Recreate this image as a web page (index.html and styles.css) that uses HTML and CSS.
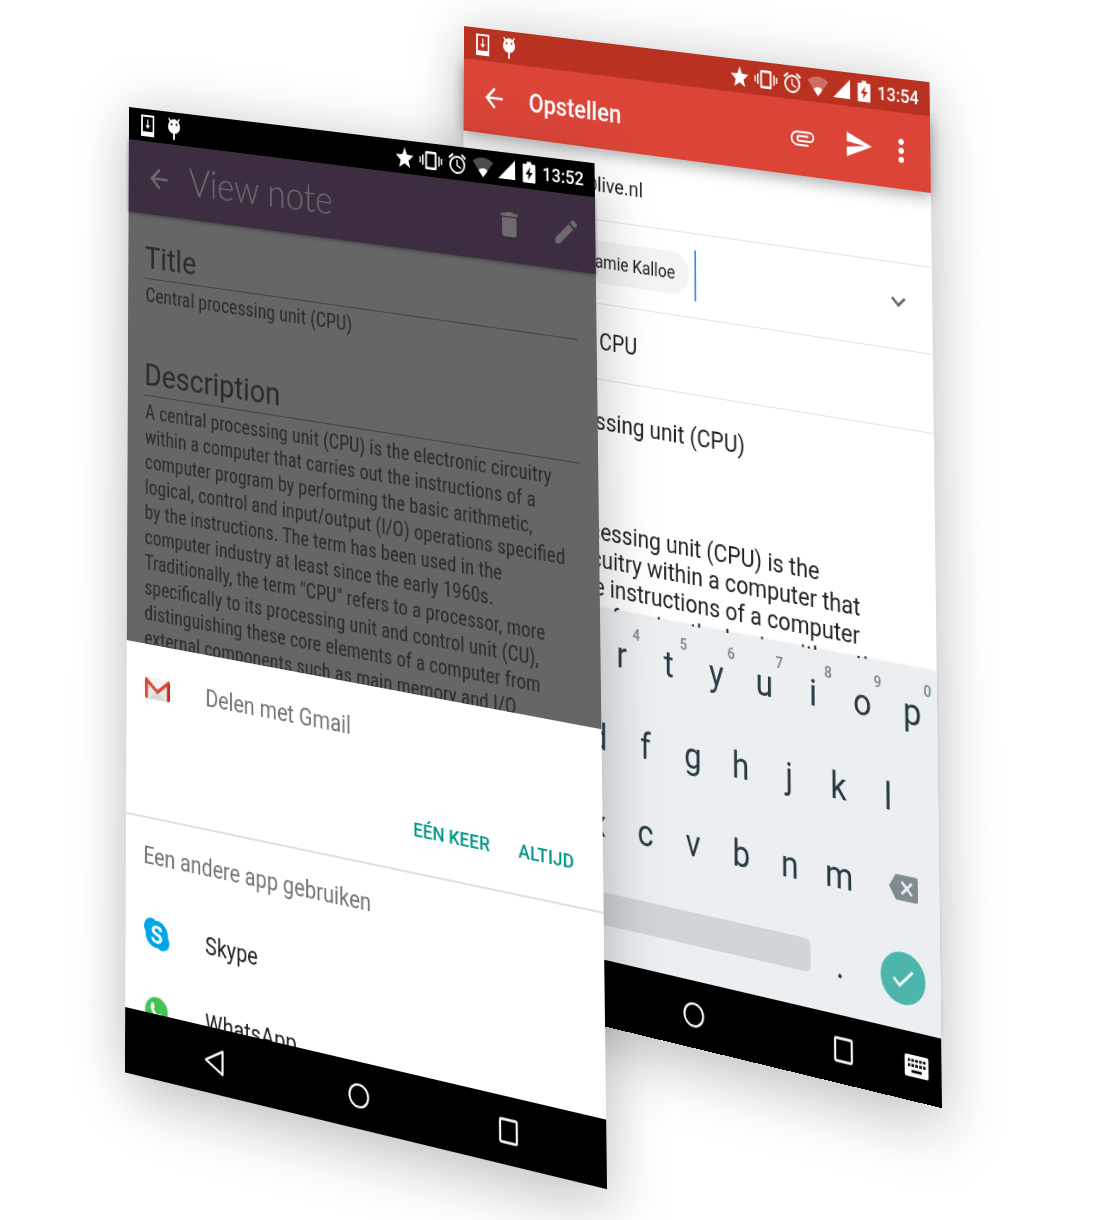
FILE: index.html
```html
<!DOCTYPE html>
<html lang="nl">
<head>
<meta charset="utf-8">
<meta name="viewport" content="width=device-width, initial-scale=1">
<title>Notitie delen</title>
<link rel="stylesheet" href="styles.css">
</head>
<body>
<svg class="sprite" aria-hidden="true">
  <symbol id="i-download" viewBox="0 0 16 22"><path fill-rule="evenodd" d="M0 0h16v22H0zM2 2v15h12V2z"/><path d="M7.300 4.500h1.400v6h2.300L8 14l-3-3.500h2.300z"/></symbol>
  <symbol id="i-droid" viewBox="0 0 16 22"><path fill-rule="evenodd" d="M2 0l2 2.500a7 7 0 0 1 8 0L14 0l1 .8-1.700 3C16.500 8 15.500 13 11 15.500H9V22H7v-6.500H5C.5 13 -.5 8 2.700 3.800L1 .8zM5 5.200a1.200 1.200 0 1 0 .1 0zM11 5.200a1.200 1.200 0 1 0 .1 0z"/></symbol>
  <symbol id="i-star" viewBox="0 0 24 24"><path d="M12 17.800L18.200 22l-1.700-7.300L22.200 9.500l-7.500-.6L12 2 9.300 8.900l-7.500.6 5.700 5.200L5.800 22z"/></symbol>
  <symbol id="i-vibrate" viewBox="0 0 26 24"><path d="M0 9h1.600v6H0zm3-2h1.600v10H3zm18.400 0H23v10h-1.600zM24.400 9H26v6h-1.600z"/><path fill-rule="evenodd" d="M8 3h10a1.500 1.500 0 0 1 1.500 1.500v15A1.500 1.500 0 0 1 18 21H8a1.500 1.500 0 0 1-1.500-1.500v-15A1.500 1.500 0 0 1 8 3zm.6 2.600v12.800h8.800V5.600z"/></symbol>
  <symbol id="i-alarm" viewBox="0 0 24 24"><path d="M22 5.720l-4.600-3.860-1.290 1.530 4.600 3.860zM7.880 3.390L6.600 1.860 2 5.710l1.290 1.530zM12.500 8H11v6l4.750 2.850.75-1.230-4-2.370zM12 4a9 9 0 1 0 0 18 9 9 0 0 0 0-18zm0 16a7 7 0 1 1 0-14 7 7 0 0 1 0 14z"/></symbol>
  <symbol id="i-wifi" viewBox="0 0 24 24"><path opacity=".3" d="M12 22L.5 7a18 18 0 0 1 23 0z"/><path d="M12 22l-5.200-6.800a8.500 8.500 0 0 1 10.400 0z"/></symbol>
  <symbol id="i-signal" viewBox="0 0 22 24"><path d="M0 21L19 2v19z"/></symbol>
  <symbol id="i-battery" viewBox="0 0 16 24"><path fill-rule="evenodd" d="M5 1.500h5v2.200h3.500a1 1 0 0 1 1 1V21a1 1 0 0 1-1 1h-12a1 1 0 0 1-1-1V4.700a1 1 0 0 1 1-1H5zM9 6.500L3.500 14H7l-1 5.500L11.500 12H8z"/></symbol>
  <symbol id="i-back" viewBox="0 0 24 24"><path d="M20 11H7.830l5.590-5.590L12 4l-8 8 8 8 1.410-1.410L7.830 13H20z"/></symbol>
  <symbol id="i-delete" viewBox="0 0 24 24"><path d="M6 19a2 2 0 0 0 2 2h8a2 2 0 0 0 2-2V7H6zM19 4h-3.500l-1-1h-5l-1 1H5v2h14z"/></symbol>
  <symbol id="i-edit" viewBox="0 0 24 24"><path d="M3 17.250V21h3.750L17.810 9.940l-3.750-3.750zM20.710 7.040a1 1 0 0 0 0-1.410l-2.340-2.340a1 1 0 0 0-1.410 0l-1.830 1.830 3.750 3.750z"/></symbol>
  <symbol id="i-attach" viewBox="0 0 24 24"><path d="M2 12.500A5.500 5.500 0 0 1 7.500 7H18a4 4 0 0 1 0 8H9.500a2.500 2.500 0 0 1 0-5H17v1.500H9.500a1 1 0 0 0 0 2H18a2.500 2.500 0 0 0 0-5H7.500a4 4 0 0 0 0 8H17V18H7.500A5.500 5.500 0 0 1 2 12.500z"/></symbol>
  <symbol id="i-send" viewBox="0 0 24 24"><path d="M2 21l21-9L2 3v7l15 2-15 2z"/></symbol>
  <symbol id="i-more" viewBox="0 0 24 24"><circle cx="12" cy="5.500" r="2.200"/><circle cx="12" cy="12" r="2.200"/><circle cx="12" cy="18.500" r="2.200"/></symbol>
  <symbol id="i-expand" viewBox="0 0 24 24"><path d="M16.590 8.590L12 13.170 7.410 8.590 6 10l6 6 6-6z"/></symbol>
  <symbol id="i-nav-back" viewBox="0 0 26 26"><path d="M22.500 2v22L3 13z" fill="none" stroke="currentColor" stroke-width="2.300" stroke-linejoin="round"/></symbol>
  <symbol id="i-nav-home" viewBox="0 0 26 26"><circle cx="13" cy="13" r="10.500" fill="none" stroke="currentColor" stroke-width="2.200"/></symbol>
  <symbol id="i-nav-recent" viewBox="0 0 26 26"><rect x="4" y="2.500" width="18" height="21" rx="1" fill="none" stroke="currentColor" stroke-width="2.300"/></symbol>
  <symbol id="i-nav-keyboard" viewBox="0 0 28 22"><path fill-rule="evenodd" d="M2 0h24a2 2 0 0 1 2 2v18a2 2 0 0 1-2 2H2a2 2 0 0 1-2-2V2a2 2 0 0 1 2-2zM3.500 4v3h3V4zm4.500 0v3h3V4zm4.500 0v3h3V4zm4.500 0v3h3V4zm4.500 0v3h3V4zM3.500 9v3h3V9zm4.500 0v3h3V9zm4.500 0v3h3V9zm4.500 0v3h3V9zm4.500 0v3h3V9zM8 15v3h12v-3z"/></symbol>
  <symbol id="i-backspace" viewBox="0 0 34 28"><path fill-rule="evenodd" d="M9.500 1H32a2 2 0 0 1 2 2v22a2 2 0 0 1-2 2H9.500a2.500 2.500 0 0 1-2-1L0 14 7.500 2a2.500 2.500 0 0 1 2-1zm4.300 7.900l5.100 5.100-5.100 5.100 2 2 5.100-5.100 5.100 5.100 2-2-5.100-5.100 5.100-5.100-2-2-5.100 5.100-5.100-5.100z"/></symbol>
  <symbol id="i-check" viewBox="0 0 24 24"><path d="M9 16.170L4.830 12l-1.420 1.410L9 19 21 7l-1.410-1.410z"/></symbol>
</svg>

<main class="stage">

  <section class="phone phone-mail" aria-label="Opstellen">
    <div class="status status-mail">
      <svg class="ic-notice"><use href="#i-download"/></svg>
      <svg class="ic-notice"><use href="#i-droid"/></svg>
      <div class="tray">
        <svg class="ic24"><use href="#i-star"/></svg>
        <svg class="ic26"><use href="#i-vibrate"/></svg>
        <svg class="ic24"><use href="#i-alarm"/></svg>
        <svg class="ic24"><use href="#i-wifi"/></svg>
        <svg class="ic22"><use href="#i-signal"/></svg>
        <svg class="ic16"><use href="#i-battery"/></svg>
        <time class="clock">13:54</time>
      </div>
    </div>
    <header class="bar bar-mail">
      <button class="icon-btn" type="button" aria-label="Terug"><svg><use href="#i-back"/></svg></button>
      <h1 class="mail-title">Opstellen</h1>
      <div class="mail-actions">
        <button class="icon-btn" type="button" aria-label="Bijlage"><svg><use href="#i-attach"/></svg></button>
        <button class="icon-btn send" type="button" aria-label="Verzenden"><svg><use href="#i-send"/></svg></button>
        <button class="icon-btn" type="button" aria-label="Meer"><svg><use href="#i-more"/></svg></button>
      </div>
    </header>
    <form class="compose">
      <div class="field field-from"><input type="text" aria-label="Van" value="@live.nl" readonly></div>
      <div class="field field-to">
        <span class="chip">Jamie Kalloe</span>
        <span class="caret"></span>
        <input type="text" aria-label="Aan">
        <button class="icon-btn expand" type="button" aria-label="Cc/Bcc"><svg><use href="#i-expand"/></svg></button>
      </div>
      <div class="field field-subject"><input type="text" aria-label="Onderwerp" value="CPU"></div>
      <textarea class="message" aria-label="Bericht">Central processing unit (CPU)



A central processing unit (CPU) is the
electronic circuitry within a computer that
carries out the instructions of a computer
program by performing the basic arithmetic,</textarea>
    </form>
    <div class="keyboard">
      <div class="keys">
        <button type="button">q<sup>1</sup></button><button type="button">w<sup>2</sup></button><button type="button">e<sup>3</sup></button><button type="button">r<sup>4</sup></button><button type="button">t<sup>5</sup></button><button type="button">y<sup>6</sup></button><button type="button">u<sup>7</sup></button><button type="button">i<sup>8</sup></button><button type="button">o<sup>9</sup></button><button type="button">p<sup>0</sup></button>
      </div>
      <div class="keys keys-inset">
        <button type="button">a</button><button type="button">s</button><button type="button">d</button><button type="button">f</button><button type="button">g</button><button type="button">h</button><button type="button">j</button><button type="button">k</button><button type="button">l</button>
      </div>
      <div class="keys keys-third">
        <button type="button">z</button><button type="button">x</button><button type="button">c</button><button type="button">v</button><button type="button">b</button><button type="button">n</button><button type="button">m</button><button class="backspace" type="button" aria-label="Wissen"><svg><use href="#i-backspace"/></svg></button>
      </div>
      <div class="keys keys-last">
        <button class="space" type="button" aria-label="Spatie"></button><button class="dot" type="button">.</button><button class="done" type="button" aria-label="Gereed"><svg><use href="#i-check"/></svg></button>
      </div>
    </div>
    <nav class="nav">
      <button type="button" aria-label="Terug"><svg><use href="#i-nav-back"/></svg></button>
      <button type="button" aria-label="Start"><svg><use href="#i-nav-home"/></svg></button>
      <button type="button" aria-label="Recent"><svg><use href="#i-nav-recent"/></svg></button>
      <button class="nav-keyboard" type="button" aria-label="Toetsenbord"><svg><use href="#i-nav-keyboard"/></svg></button>
    </nav>
  </section>

  <section class="phone phone-note" aria-label="View note">
    <div class="status status-note">
      <svg class="ic-notice"><use href="#i-download"/></svg>
      <svg class="ic-notice"><use href="#i-droid"/></svg>
      <div class="tray">
        <svg class="ic24"><use href="#i-star"/></svg>
        <svg class="ic26"><use href="#i-vibrate"/></svg>
        <svg class="ic24"><use href="#i-alarm"/></svg>
        <svg class="ic24"><use href="#i-wifi"/></svg>
        <svg class="ic22"><use href="#i-signal"/></svg>
        <svg class="ic16"><use href="#i-battery"/></svg>
        <time class="clock">13:52</time>
      </div>
    </div>
    <header class="bar bar-note">
      <button class="icon-btn" type="button" aria-label="Terug"><svg><use href="#i-back"/></svg></button>
      <h1 class="note-title">View note</h1>
      <div class="note-actions">
        <button class="icon-btn" type="button" aria-label="Verwijderen"><svg><use href="#i-delete"/></svg></button>
        <button class="icon-btn" type="button" aria-label="Bewerken"><svg><use href="#i-edit"/></svg></button>
      </div>
    </header>
    <article class="note">
      <h2>Title</h2>
      <p>Central processing unit (CPU)</p>
      <h2>Description</h2>
      <p>A central processing unit (CPU) is the electronic circuitry<br>
        within a computer that carries out the instructions of a<br>
        computer program by performing the basic arithmetic,<br>
        logical, control and input/output (I/O) operations specified<br>
        by the instructions. The term has been used in the<br>
        computer industry at least since the early 1960s.<br>
        Traditionally, the term "CPU" refers to a processor, more<br>
        specifically to its processing unit and control unit (CU),<br>
        distinguishing these core elements of a computer from<br>
        external components such as main memory and I/O</p>
    </article>
    <div class="sheet">
      <div class="app app-default">
        <svg class="app-icon" viewBox="-1 -1 34 34">
          <path fill="#e6e6e6" d="M2 5h28v22H2z"/>
          <path fill="#cfcfcf" d="M16 18L5 27h22z" opacity=".7"/>
          <path fill="#f4f4f4" d="M3 5h26L16 17z"/>
          <path fill="#dd4b3e" d="M0 7a2 2 0 0 1 2-2l14 11.500L30 5a2 2 0 0 1 2 2l-3.500 4L16 21 4 11.500V27H2a2 2 0 0 1-2-2z"/>
          <path fill="#b93127" d="M28 10.500L32 7v18a2 2 0 0 1-2 2h-2z"/>
        </svg>
        <span>Delen met Gmail</span>
      </div>
      <div class="choices">
        <button type="button">EÉN KEER</button>
        <button type="button">ALTIJD</button>
      </div>
      <h3 class="sheet-label">Een andere app gebruiken</h3>
      <div class="app">
        <svg class="app-icon" viewBox="-1 -1 34 34">
          <g fill="#00a5e8"><circle cx="9" cy="9" r="9"/><circle cx="23" cy="23" r="9"/><circle cx="16" cy="16" r="14"/></g>
          <text class="skype-s" x="16" y="25" text-anchor="middle">S</text>
        </svg>
        <span>Skype</span>
      </div>
      <div class="app">
        <svg class="app-icon" viewBox="-1 -1 34 34">
          <circle cx="16" cy="16" r="15.500" fill="#e9e9e9"/>
          <circle cx="16" cy="16" r="14" fill="#43c353"/>
          <path fill="#fff" d="M9.500 9c1-1.500 2.500-1.500 3-.5l1.200 3c.3 1-1.200 2-1.200 2.500 1 2.500 3 4.300 5.500 5.300.7 0 1.600-1.700 2.400-1.400l2.900 1.500c.8.600.2 2.300-.6 3-3 2.300-8.500-.8-11.200-4-2.500-3-3.800-6.500-2-9.400z"/>
        </svg>
        <span>WhatsApp</span>
      </div>
    </div>
    <nav class="nav">
      <button type="button" aria-label="Terug"><svg><use href="#i-nav-back"/></svg></button>
      <button type="button" aria-label="Start"><svg><use href="#i-nav-home"/></svg></button>
      <button type="button" aria-label="Recent"><svg><use href="#i-nav-recent"/></svg></button>
    </nav>
  </section>

</main>
</body>
</html>
```
FILE: styles.css
```css
* {
  box-sizing: border-box;
}

body {
  margin: 0;
  background: #fff;
  font-family: Roboto, "Liberation Sans", sans-serif;
  overflow-x: hidden;
}

h1, h2, h3, p {
  margin: 0;
  font-weight: 400;
}

button, input, textarea {
  margin: 0;
  padding: 0;
  border: 0;
  background: none;
  color: inherit;
  font: inherit;
  outline: 0;
}

svg {
  display: block;
  fill: currentColor;
}

.sprite {
  position: absolute;
  width: 0;
  height: 0;
}

/* Two tilted handsets on a free canvas */
.stage {
  position: relative;
  min-height: 1220px;
  overflow: hidden;
}

.phone {
  position: absolute;
  display: flex;
  flex-direction: column;
  width: 540px;
  height: 960px;
  background: #fff;
  box-shadow: 0 12px 60px rgba(0, 0, 0, 0.28);
  transform-origin: 0 0;
  transform: matrix3d(0.81434, 0.098317, 0, -0.00010246, -0.0040302, 0.97264, 0, -0.000034167, 0, 0, 1, 0, 0, 0, 0, 1);
}

.phone-mail {
  left: 464px;
  top: 26px;
}

.phone-note {
  left: 129px;
  top: 107px;
}

/* Status bar */
.status {
  position: relative;
  z-index: 1;
  display: flex;
  flex: none;
  align-items: center;
  gap: 16px;
  height: 33px;
  padding: 0 12px 0 15px;
  color: #fff;
}

.status-mail { background: #b93221; }
.status-note { background: #000; }

.tray {
  display: flex;
  align-items: center;
  gap: 5px;
  margin-left: auto;
}

.ic-notice { width: 16px; height: 22px; }
.ic16 { width: 16px; height: 24px; }
.ic22 { width: 22px; height: 24px; }
.ic24 { width: 24px; height: 24px; }
.ic26 { width: 26px; height: 24px; }

.clock {
  padding-left: 1px;
  font-size: 18px;
  font-weight: 500;
}

/* App bars */
.bar {
  position: relative;
  display: flex;
  flex: none;
  align-items: center;
  height: 74px;
  padding: 0 16px 0 21px;
}

.bar-mail {
  background: #db4437;
  color: #fff;
  box-shadow: 0 4px 14px rgba(0, 0, 0, 0.35);
}

.bar-note {
  background: #3c2d40;
  color: #6e6b6e;
  box-shadow: 0 1px 4px rgba(0, 0, 0, 0.4);
}

.icon-btn {
  flex: none;
  width: 32px;
  height: 32px;
}

.icon-btn svg {
  width: 32px;
  height: 32px;
}

.mail-title {
  margin-left: 26px;
  font-size: 26px;
  font-weight: 500;
}

.note-title {
  margin-left: 20px;
  padding-bottom: 4px;
  font-family: Lato, Roboto, sans-serif;
  font-size: 39px;
  font-weight: 300;
  line-height: 48px;
}

.mail-actions,
.note-actions {
  display: flex;
  margin-left: auto;
}

.note-actions { gap: 31px; }
.mail-actions { gap: 15px; }
.mail-actions .send { margin-left: 16px; }

/* Compose form */
.compose {
  display: flex;
  flex: 1;
  flex-direction: column;
  min-height: 0;
  overflow: hidden;
  color: #222;
}

.field {
  display: flex;
  flex: none;
  align-items: center;
  border-bottom: 1px solid #e4e4e4;
}

.field input {
  flex: 1;
  min-width: 0;
}

.field-from {
  height: 72px;
  padding-left: 142px;
  font-size: 21px;
}

.field-to {
  height: 83px;
  padding: 0 21px 0 96px;
}

.field-subject {
  height: 75px;
  padding-left: 163px;
  font-size: 23px;
}

.chip {
  height: 42px;
  padding: 0 16px 0 52px;
  border-radius: 21px;
  background: #f3f3f3;
  font-size: 18px;
  line-height: 42px;
}

.caret {
  width: 2px;
  height: 50px;
  margin-left: 6px;
  background: #4285f4;
}

.expand {
  margin-bottom: 8px;
  color: #666;
}

.message {
  flex: 1;
  min-height: 0;
  padding: 28px 0 0 16px;
  overflow: hidden;
  resize: none;
  font-size: 24px;
  line-height: 27px;
  white-space: pre;
}

/* Keyboard */
.keyboard {
  flex: none;
  padding-bottom: 4px;
  background: #ebeff2;
  color: #263a43;
  box-shadow: 0 -1px 3px rgba(0, 0, 0, 0.12);
}

.keys {
  display: flex;
  height: 83px;
}

.keys button {
  position: relative;
  flex: 1;
  font-size: 35px;
}

.keys sup {
  position: absolute;
  top: 10px;
  right: 6px;
  color: #77848a;
  font-size: 15px;
  font-weight: 500;
  line-height: 18px;
}

.keys-inset { padding: 0 27px; }
.keys-third { padding-left: 81px; }

.keys .backspace {
  flex: 0 0 81px;
  padding: 0 0 4px 27px;
  color: #7f8b90;
}

.backspace svg {
  width: 31px;
  height: 26px;
}

.keys-last {
  align-items: center;
  padding: 0 16px 0 140px;
}

.keys .space {
  height: 31px;
  margin-bottom: 6px;
  border-radius: 6px;
  background: #d0d5d8;
}

.keys .dot {
  flex: 0 0 54px;
  margin: 0 17px 0 5px;
}

.keys .done {
  flex: 0 0 48px;
  height: 48px;
  margin-bottom: 4px;
  padding-left: 9px;
  border-radius: 50%;
  background: #4db6ac;
  color: #fff;
}

.done svg {
  width: 30px;
  height: 30px;
}

/* Note */
.note {
  flex: 1;
  min-height: 0;
  padding: 0 20px;
  overflow: hidden;
  background: #666;
  color: #2b2b2b;
}

.note h2 {
  height: 66px;
  padding-top: 24px;
  border-bottom: 1px solid #434343;
  font-size: 32px;
  line-height: 40px;
}

.note p {
  padding: 4px 0 0 1px;
  margin-bottom: 23px;
  font-family: "Roboto Condensed", Roboto, sans-serif;
  font-size: 21px;
  line-height: 25px;
  white-space: nowrap;
}

/* Share sheet */
.sheet {
  flex: none;
  height: 359px;
  overflow: hidden;
  background: #fff;
  color: #212121;
  font-size: 23px;
}

.app {
  display: flex;
  align-items: center;
  gap: 41px;
  height: 74px;
  padding: 0 21px;
}

.app-default {
  height: 85px;
  color: #737373;
}

.app-icon {
  width: 32px;
  height: 32px;
}

.skype-s {
  fill: #fff;
  font-size: 25px;
  font-weight: 700;
}

.choices {
  display: flex;
  justify-content: flex-end;
  gap: 31px;
  height: 86px;
  padding: 32px 31px 0 0;
  border-bottom: 2px solid #e0e0e0;
  color: #009688;
  font-size: 19px;
  font-weight: 500;
}

.choices button { height: 20px; }

.sheet-label {
  padding-left: 21px;
  color: #737373;
  font-size: 23px;
  line-height: 74px;
}

/* System navigation */
.nav {
  position: relative;
  display: grid;
  flex: none;
  grid-template-columns: repeat(3, 1fr);
  height: 63px;
  padding: 0 22px;
  background: #000;
  color: #fff;
}

.nav button {
  display: grid;
  place-items: center;
}

.nav svg {
  width: 26px;
  height: 26px;
}

.nav .nav-keyboard {
  position: absolute;
  top: 21px;
  right: 13px;
}

.nav .nav-keyboard svg {
  width: 27px;
  height: 20px;
}
```
